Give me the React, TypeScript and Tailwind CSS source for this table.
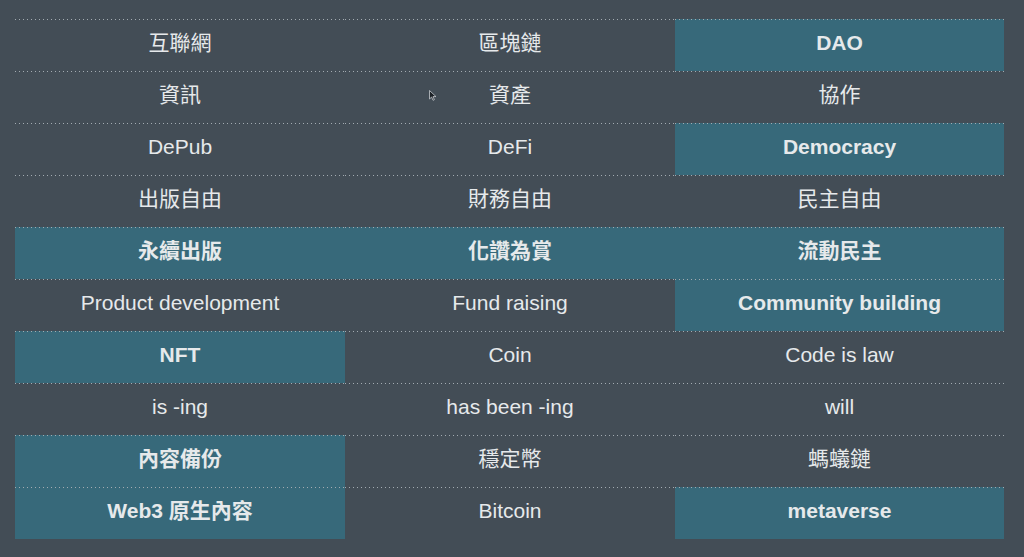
const rows: { text: string; hl?: boolean }[][] = [
  [{ text: '互聯網' }, { text: '區塊鏈' }, { text: 'DAO', hl: true }],
  [{ text: '資訊' }, { text: '資產' }, { text: '協作' }],
  [{ text: 'DePub' }, { text: 'DeFi' }, { text: 'Democracy', hl: true }],
  [{ text: '出版自由' }, { text: '財務自由' }, { text: '民主自由' }],
  [
    { text: '永續出版', hl: true },
    { text: '化讚為賞', hl: true },
    { text: '流動民主', hl: true },
  ],
  [{ text: 'Product development' }, { text: 'Fund raising' }, { text: 'Community building', hl: true }],
  [{ text: 'NFT', hl: true }, { text: 'Coin' }, { text: 'Code is law' }],
  [{ text: 'is -ing' }, { text: 'has been -ing' }, { text: 'will' }],
  [{ text: '內容備份', hl: true }, { text: '穩定幣' }, { text: '螞蟻鏈' }],
  [{ text: 'Web3 原生內容', hl: true }, { text: 'Bitcoin' }, { text: 'metaverse', hl: true }],
];

function Cell({ text, hl }: { text: string; hl?: boolean }) {
  return (
    <div className={`flex flex-col h-[52px] ${hl ? 'bg-[#37697a] font-bold' : ''}`}>
      {/* dotted rule, gaps show the cell colour */}
      <div className="h-px w-full bg-[linear-gradient(to_right,#a3abb1_1px,transparent_1px)] bg-[length:4px_1px] bg-repeat-x" />
      <div className="flex-1 flex items-center justify-center pb-[5px]">{text}</div>
    </div>
  );
}

export default function App() {
  return (
    <div
      className="relative w-[1024px] h-[557px] bg-[#434d56] text-[#e6e9eb] text-[21px] pt-[19px] pl-[15px]"
      style={{ fontFamily: '"Liberation Sans", "Noto Sans CJK TC", sans-serif' }}
    >
      <div className="w-[989px] grid grid-cols-[330px_330px_329px]">
        {rows.map((row, i) => row.map((c, j) => <Cell key={`${i}-${j}`} text={c.text} hl={c.hl} />))}
      </div>

      {/* mouse pointer */}
      <svg className="absolute left-[429px] top-[90px]" width="8" height="11" viewBox="0 0 8 11">
        <path d="M0.5 0.5 L0.5 9 L2.6 7 L4 10.3 L5.4 9.7 L4 6.6 L7 6.6 Z" fill="#1c2126" stroke="#c8ccd0" strokeWidth="0.8" />
      </svg>
    </div>
  );
}
